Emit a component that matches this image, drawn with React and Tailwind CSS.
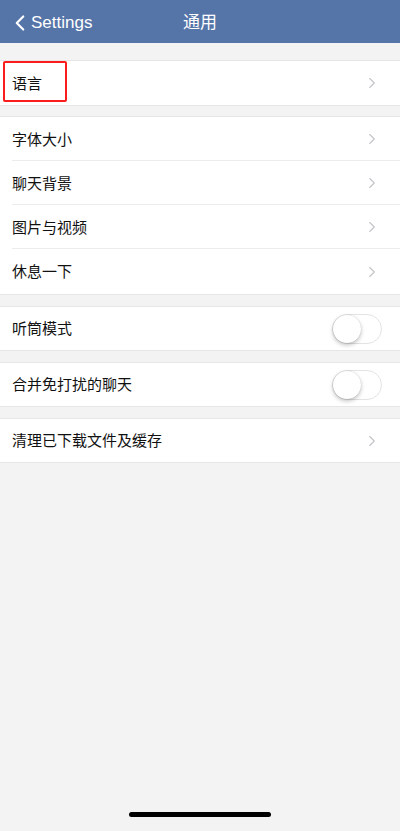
import { ChevronRight, ChevronLeft } from "lucide-react";

const font = { fontFamily: '"Noto Sans", "Noto Sans CJK SC", sans-serif' };

function Row({ label, last, toggle, highlight, h = "h-[44px]" }) {
  return (
    <div className={`relative flex ${h} items-center bg-white pl-3 pr-[19px]`}>
      {highlight && (
        <div className="pointer-events-none absolute left-[3px] top-0 h-[41px] w-[64px] rounded-[2px] border-2 border-[#fb1c1c]" />
      )}
      <span className="flex-1 text-[15px] text-[#111]">{label}</span>
      {toggle ? (
        <div className="-mr-[1px] flex h-[30px] w-[50px] items-center rounded-full border border-[#e3e3e3] bg-white">
          <div className="h-[28px] w-[28px] rounded-full bg-white shadow-[0_2px_4px_rgba(0,0,0,0.25),0_0_1px_rgba(0,0,0,0.2)]" />
        </div>
      ) : (
        <ChevronRight className="h-[18px] w-[18px] text-[#c4c4c8]" strokeWidth={1.5} />
      )}
      {!last && <div className="absolute bottom-0 left-3 right-0 h-px bg-[#ececec]" />}
    </div>
  );
}

function Group({ children, className }) {
  return <div className={`border-y border-[#e6e6e6] ${className}`}>{children}</div>;
}

export default function App() {
  return (
    <div className="relative flex h-[831px] w-[400px] flex-col bg-[#f3f3f3]" style={font}>
      <div className="relative flex h-[43px] items-center bg-[#5574a8] text-white">
        <div className="flex items-center pl-[7px] pt-[2px]">
          <ChevronLeft className="h-[26px] w-[26px]" strokeWidth={2} />
          <span className="-ml-[2px] text-[17px]" style={{ fontFamily: '"Liberation Sans", sans-serif' }}>Settings</span>
        </div>
        <span className="absolute left-1/2 top-[10px] -translate-x-1/2 text-[17px] leading-[24px]">通用</span>
      </div>

      <Group className="mt-[17px]">
        <Row label="语言" last highlight />
      </Group>
      <Group className="mt-[10px]">
        <Row label="字体大小" />
        <Row label="聊天背景" />
        <Row label="图片与视频" />
        <Row label="休息一下" last h="h-[45px]" />
      </Group>
      <Group className="mt-[11px]">
        <Row label="听筒模式" toggle last h="h-[43px]" />
      </Group>
      <Group className="mt-[11px]">
        <Row label="合并免打扰的聊天" toggle last h="h-[43px]" />
      </Group>
      <Group className="mt-[11px]">
        <Row label="清理已下载文件及缓存" last h="h-[43px]" />
      </Group>

      <div className="absolute bottom-[14px] left-1/2 h-[5px] w-[142px] -translate-x-1/2 rounded-full bg-black" />
    </div>
  );
}
